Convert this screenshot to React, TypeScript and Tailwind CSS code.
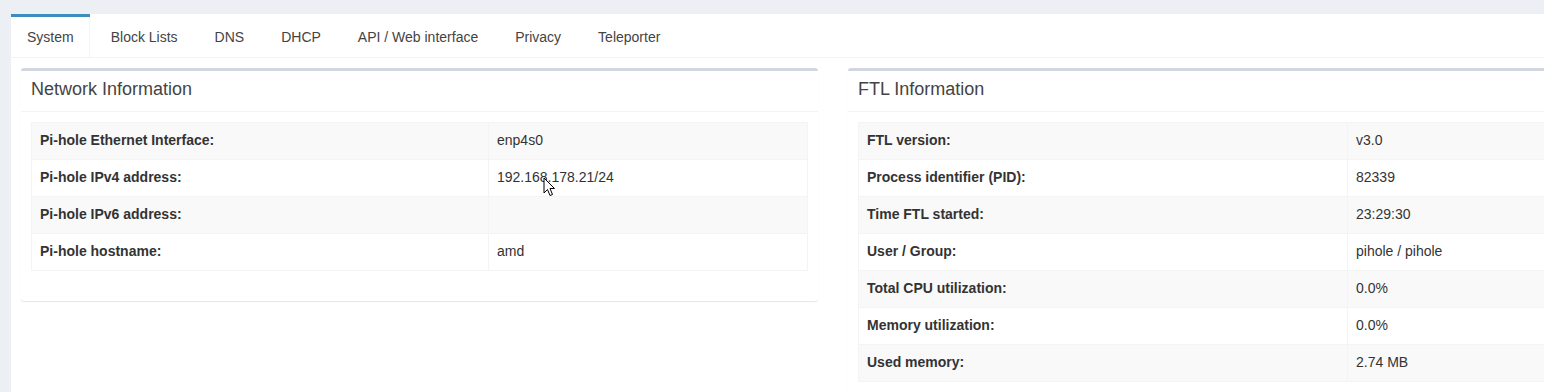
type Row = { label: string; value: string }

const tabs = ["System", "Block Lists", "DNS", "DHCP", "API / Web interface", "Privacy", "Teleporter"]

const network: Row[] = [
  { label: "Pi-hole Ethernet Interface:", value: "enp4s0" },
  { label: "Pi-hole IPv4 address:", value: "192.168.178.21/24" },
  { label: "Pi-hole IPv6 address:", value: "" },
  { label: "Pi-hole hostname:", value: "amd" },
]

const ftl: Row[] = [
  { label: "FTL version:", value: "v3.0" },
  { label: "Process identifier (PID):", value: "82339" },
  { label: "Time FTL started:", value: "23:29:30" },
  { label: "User / Group:", value: "pihole / pihole" },
  { label: "Total CPU utilization:", value: "0.0%" },
  { label: "Memory utilization:", value: "0.0%" },
  { label: "Used memory:", value: "2.74 MB" },
]

const InfoBox = ({ title, rows, labelWidth }: { title: string; rows: Row[]; labelWidth: string }) => {
  return (
    <div className="w-[797px] shrink-0 self-start rounded-[3px] border-t-[3px] border-[#d2d6de] bg-white shadow-[0_1px_1px_rgba(0,0,0,0.1)]">
      <div className="border-b border-[#f4f4f4] px-[10px] pb-[12px] pt-[8px]">
        <h3 className="text-[18px] leading-5 text-[#444]">{title}</h3>
      </div>
      <div className="p-[10px]">
        <table className="mb-5 w-full border-collapse border border-[#f4f4f4] text-[14px] leading-5 text-[#333]">
          <tbody>
            {rows.map((row, i) => (
              <tr key={row.label} className={i % 2 === 0 ? "bg-[#f9f9f9]" : "bg-white"}>
                <th className={`${labelWidth} border border-[#f4f4f4] px-2 pb-[9px] pt-[7px] text-left font-bold`}>
                  {row.label}
                </th>
                <td className="h-[37px] border border-[#f4f4f4] px-2 pb-[9px] pt-[7px]">{row.value}</td>
              </tr>
            ))}
          </tbody>
        </table>
      </div>
    </div>
  )
}

export default function App() {
  return (
    <div className="relative h-[392px] overflow-hidden bg-[#ecf0f5] pl-[11px] pt-[14px] font-['Liberation_Sans',Arial,sans-serif]">
      <div className="min-h-[400px] w-[1655px] bg-white">
        <ul className="flex border-b border-[#f4f4f4]">
          {tabs.map((tab, i) => (
            <li
              key={tab}
              className={
                i === 0
                  ? "-mb-px mr-[5px] border-t-[3px] border-[#3c8dbc]"
                  : "mr-[5px] border-t-[3px] border-transparent"
              }
            >
              <a
                className={
                  i === 0
                    ? "block border-l border-r border-l-transparent border-r-[#f4f4f4] bg-white px-[15px] py-[10px] text-[14px] leading-5 text-[#444]"
                    : "block border-x border-transparent px-[15px] py-[10px] text-[14px] leading-5 text-[#444]"
                }
              >
                {tab}
              </a>
            </li>
          ))}
        </ul>
        <div className="flex gap-[30px] p-[10px]">
          <InfoBox title="Network Information" rows={network} labelWidth="w-[457px]" />
          <InfoBox title="FTL Information" rows={ftl} labelWidth="w-[489px]" />
        </div>
      </div>
      {/* mouse cursor */}
      <svg className="absolute left-[543px] top-[177px]" width="13" height="20" viewBox="0 0 13 20">
        <path
          d="M1 1 L1 16 L4.5 12.5 L7 18.5 L9.5 17.5 L7 11.5 L11.5 11.5 Z"
          fill="#fff"
          stroke="#000"
          strokeWidth="1"
          strokeLinejoin="round"
        />
      </svg>
    </div>
  )
}
